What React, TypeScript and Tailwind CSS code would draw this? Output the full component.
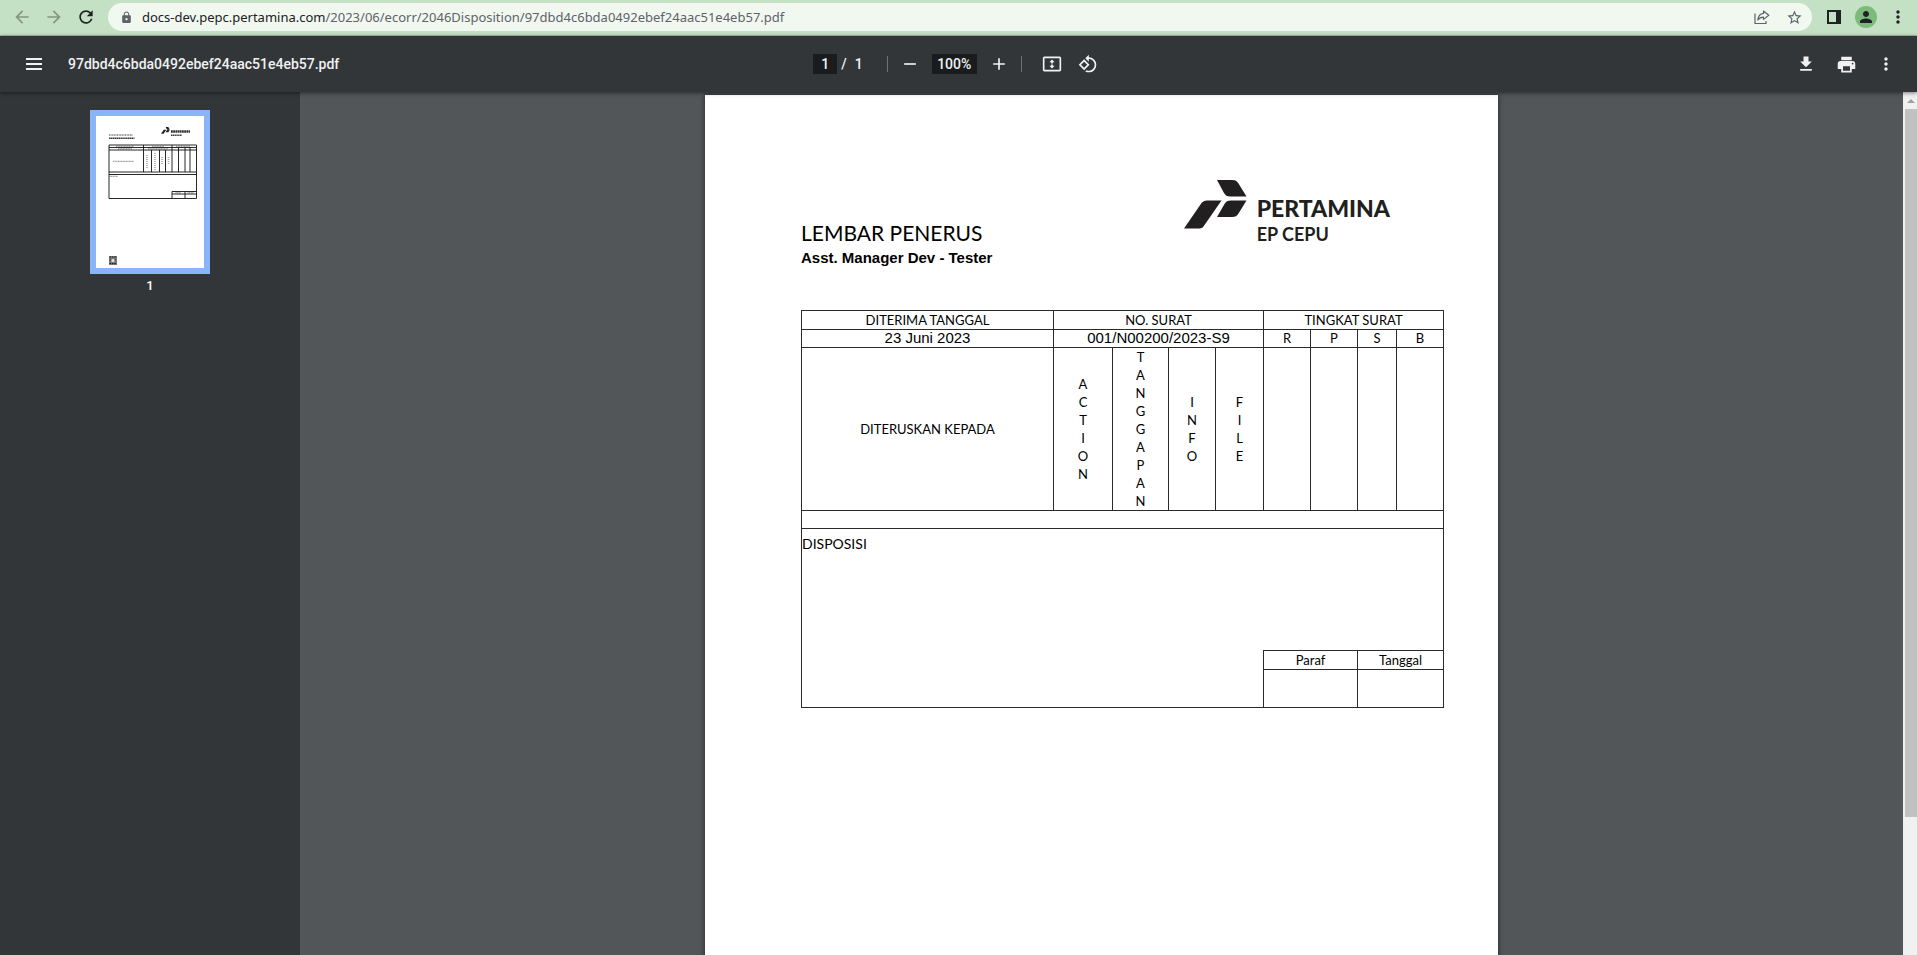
import type { ReactNode } from "react";
import {
  MdAdd,
  MdArrowBack,
  MdArrowForward,
  MdLock,
  MdMoreVert,
  MdPerson,
  MdPrint,
  MdRefresh,
  MdRemove,
  MdRotate90DegreesCcw,
  MdStarBorder,
} from "react-icons/md";

const FILE_NAME = "97dbd4c6bda0492ebef24aac51e4eb57.pdf";

function IconButton({ label, className = "", children }: { label: string; className?: string; children: ReactNode }) {
  return (
    <button type="button" aria-label={label} className={`flex size-8 shrink-0 items-center justify-center ${className}`}>
      {children}
    </button>
  );
}

function ShareIcon() {
  return (
    <svg width="16" height="16" viewBox="0 0 16 16" fill="none" stroke="currentColor" strokeWidth="1.2">
      <path d="M1 4.5V14.5H12V12" />
      <path d="M9.5 2L14.8 6.2L9.5 10.4V8.2C7 8.2 5.2 9 3.8 11C4.2 7.6 6.2 4.8 9.5 4.4Z" strokeLinejoin="round" />
    </svg>
  );
}

function SidePanelIcon() {
  return (
    <svg width="14" height="14" viewBox="0 0 14 14" fill="currentColor">
      <path fillRule="evenodd" d="M0 0H14V14H0ZM2 2V12H9V2Z" />
    </svg>
  );
}

function MenuIcon() {
  return (
    <svg width="16" height="12" viewBox="0 0 16 12" fill="currentColor">
      <path d="M0 0H16V2H0ZM0 5H16V7H0ZM0 10H16V12H0Z" />
    </svg>
  );
}

function FitPageIcon() {
  return (
    <svg width="20" height="20" viewBox="0 0 24 24" fill="currentColor">
      <path d="M21 3H3c-1.1 0-2 .9-2 2v14c0 1.1.9 2 2 2h18c1.1 0 2-.9 2-2V5c0-1.1-.9-2-2-2zm0 16H3V5h18v14z" />
      <path d="M12 6.5L8.8 10H11v1.5h2V10h2.200L12 6.500zM12 17.500L15.200 14H13v-1.500h-2V14H8.800L12 17.500z" />
    </svg>
  );
}

function DownloadIcon() {
  return (
    <svg width="20" height="20" viewBox="0 0 24 24" fill="currentColor">
      <path d="M19 9h-4V3H9v6H5l7 7 7-7zM5 18v2h14v-2H5z" />
    </svg>
  );
}

function LogoMark({ className }: { className: string }) {
  return (
    <svg className={className} viewBox="0 0 63 49" fill="#211f20" aria-hidden="true">
      <path d="M33 0H48C51.500 0 53 1 54.500 3.500L62.500 16.500H46C43 16.500 41.500 15.500 40 13Z" />
      <path d="M37.500 20.500H24C20 20.500 18.500 21.500 16.500 24.500L0 48.500H14.500C18 48.500 19 47.500 20.500 45Z" />
      <path d="M62.500 20.500L54.500 33.500C53 36 51.500 37 48 37H33L40.500 24C42 21.500 43.500 20.500 47 20.500Z" />
    </svg>
  );
}

function BrowserBar() {
  return (
    <header className="flex h-9 shrink-0 items-start border-b border-[#a3bda3] bg-[#c5e1c5] px-1.5 text-[#202124]">
      <nav className="flex h-7 items-center pt-1.5">
        <IconButton label="Back" className="text-[#829782]"><MdArrowBack size={20} /></IconButton>
        <IconButton label="Forward" className="text-[#829782]"><MdArrowForward size={20} /></IconButton>
        <IconButton label="Reload"><MdRefresh size={20} /></IconButton>
      </nav>
      <div className="mt-[3px] ml-1.5 flex h-7 min-w-0 flex-1 items-center rounded-full bg-[#f0f8f0] pl-3 text-[#5f6368]">
        <MdLock size={13} className="mr-2 shrink-0" />
        <p className="min-w-0 flex-1 truncate pl-px font-['Noto_Sans','Open_Sans',sans-serif] text-[13px] leading-5">
          <span className="text-[#202124]">docs-dev.pepc.pertamina.com</span>
          /2023/06/ecorr/2046Disposition/{FILE_NAME}
        </p>
        <IconButton label="Share"><ShareIcon /></IconButton>
        <IconButton label="Bookmark"><MdStarBorder size={17} /></IconButton>
        <span className="w-0.5" />
      </div>
      <div className="flex h-7 items-center pt-1.5 pl-1.5">
        <IconButton label="Side panel"><SidePanelIcon /></IconButton>
        <IconButton label="Profile">
          <span className="flex size-[22px] items-center justify-center rounded-full bg-[#7cbb7c]">
            <MdPerson size={18} />
          </span>
        </IconButton>
        <IconButton label="Browser menu" className="-mr-[3px]"><MdMoreVert size={20} /></IconButton>
      </div>
    </header>
  );
}

function ViewerToolbar() {
  return (
    <div className="z-10 grid h-14 shrink-0 grid-cols-3 items-center bg-[#323639] font-['Roboto',sans-serif] text-sm font-medium text-[#f1f1f1] shadow-[0_1px_4px_rgba(0,0,0,0.5)]">
      <div className="flex items-center gap-[18px] pl-[18px]">
        <IconButton label="Toggle sidebar"><MenuIcon /></IconButton>
        <h1 className="whitespace-nowrap">{FILE_NAME}</h1>
      </div>
      <div className="flex items-center justify-center">
        <input aria-label="Page number" defaultValue="1" className="h-5 w-6 bg-[#191b1c] text-center" />
        <span className="ml-1">/</span>
        <span className="ml-2">1</span>
        <span className="ml-6 h-4 w-px bg-[#6f7275]" />
        <IconButton label="Zoom out" className="ml-1.5"><MdRemove size={20} /></IconButton>
        <input aria-label="Zoom level" defaultValue="100%" className="mx-1.5 h-5 w-[45px] bg-[#191b1c] text-center" />
        <IconButton label="Zoom in"><MdAdd size={20} /></IconButton>
        <span className="ml-1.5 h-4 w-px bg-[#6f7275]" />
        <IconButton label="Fit to page" className="ml-3.5"><FitPageIcon /></IconButton>
        <IconButton label="Rotate" className="ml-1"><MdRotate90DegreesCcw size={20} /></IconButton>
      </div>
      <div className="flex items-center justify-end gap-2 pr-[15px]">
        <IconButton label="Download"><DownloadIcon /></IconButton>
        <IconButton label="Print"><MdPrint size={21} /></IconButton>
        <IconButton label="More actions"><MdMoreVert size={20} /></IconButton>
      </div>
    </div>
  );
}

function ThumbnailDrawing() {
  return (
    <svg viewBox="0 0 108 152" className="w-full bg-white" aria-hidden="true">
      <g fill="#211f20" transform="translate(65 11) scale(.14)">
        <path d="M33 0H52L63 17H42ZM20 20H38L18 49H0ZM44 20H63L52 38H33Z" />
      </g>
      <g stroke="#333" fill="none">
        <path d="M75 15.500H94" strokeWidth="2.600" strokeDasharray="1.800 .4" />
        <path d="M75 19.300H86" strokeWidth="1.500" strokeDasharray="1.300 .5" />
        <path d="M13 19H37" strokeWidth="1.500" strokeDasharray="1 .6" stroke="#777" />
        <path d="M13 22.300H38.500" strokeWidth="1.400" strokeDasharray="1.500 .4" />
        <path d="M20 30.300H38M56 30.300H68M80 30.300H94M22 32.800H36M52 32.800H72M17 45.300H38M13.500 60.300H22M79.500 76.800H85M91.500 76.800H98" strokeDasharray="1.200 .4" stroke="#888" />
        <path d="M51 39V53M59 37V55M66 41V49M72.500 41V49" strokeWidth="1.600" strokeDasharray=".8 1.200" stroke="#888" />
      </g>
      <path d="M13 29H100.500V82.500H13ZM13 31.500H100.500M13 34H100.500M13 56H100.500M13 58.500H100.500M47.500 29V56M55.500 34V56M63.500 34V56M69.500 34V56M76 29V56M82.500 31.500V56M89 31.500V56M94 31.500V56M76 82.500V75.500H100.500M76 78H100.500M89 75.500V82.500" fill="none" stroke="#111" strokeWidth=".9" />
      <path d="M13 140H21V149H13Z" fill="#777" />
      <path d="M13.500 141H20.500M13.500 144H20.500M13.500 147.500H20.500" stroke="#222" strokeDasharray="1.500 .9" />
      <circle cx="17" cy="144.500" r="1.700" fill="#ddd" />
    </svg>
  );
}

function Vertical({ word }: { word: string }) {
  return (
    <td className="border border-[#2b2b2b] leading-[18px]">
      {word.split("").map((letter, i) => (
        <span key={i} className="block">{letter}</span>
      ))}
    </td>
  );
}

const CELL = "border border-[#2b2b2b]";

function DispositionTable() {
  return (
    <table className="mt-10 w-full table-fixed border-collapse text-center text-[13px] leading-[17px]">
      <colgroup>
        <col className="w-[252px]" />
        <col className="w-[59px]" />
        <col className="w-[56px]" />
        <col className="w-[47px]" />
        <col className="w-[48px]" />
        <col className="w-[47px]" />
        <col className="w-[47px]" />
        <col className="w-[39px]" />
        <col className="w-[47px]" />
      </colgroup>
      <tbody>
        <tr className="h-[19px]">
          <th className={`${CELL} font-normal`}>DITERIMA TANGGAL</th>
          <th colSpan={4} className={`${CELL} font-normal`}>NO. SURAT</th>
          <th colSpan={4} className={`${CELL} font-normal`}>TINGKAT SURAT</th>
        </tr>
        <tr>
          <td className={`${CELL} font-['Liberation_Sans',sans-serif] text-[15px] leading-4 align-top`}>23 Juni 2023</td>
          <td colSpan={4} className={`${CELL} font-['Liberation_Sans',sans-serif] text-[15px] leading-4 align-top`}>001/N00200/2023-S9</td>
          <td className={CELL}>R</td>
          <td className={CELL}>P</td>
          <td className={CELL}>S</td>
          <td className={CELL}>B</td>
        </tr>
        <tr>
          <td className={CELL}>DITERUSKAN KEPADA</td>
          <Vertical word="ACTION" />
          <Vertical word="TANGGAPAN" />
          <Vertical word="INFO" />
          <Vertical word="FILE" />
          <td className={CELL} />
          <td className={CELL} />
          <td className={CELL} />
          <td className={CELL} />
        </tr>
        <tr className="h-[18px]">
          <td colSpan={9} className={CELL} />
        </tr>
        <tr className="h-[122px]">
          <td colSpan={9} className="border-x border-[#2b2b2b] pt-1.5 text-left align-top text-sm leading-[18px]">DISPOSISI</td>
        </tr>
        <tr className="h-[19px]">
          <td colSpan={5} rowSpan={2} className="border-b border-l border-[#2b2b2b]" />
          <td colSpan={2} className={CELL}>Paraf</td>
          <td colSpan={2} className={CELL}>Tanggal</td>
        </tr>
        <tr className="h-[38px]">
          <td colSpan={2} className={CELL} />
          <td colSpan={2} className={CELL} />
        </tr>
      </tbody>
    </table>
  );
}

function DocumentPage() {
  return (
    <article className="aspect-[210/297] w-[793px] shrink-0 bg-white pt-[85px] pr-[54px] pl-24 font-['Lato',sans-serif] text-black shadow-[0_0_5px_rgba(0,0,0,0.6)]">
      <div className="flex items-start justify-between pr-[54px]">
        <div className="pt-10">
          <h2 className="text-[21px] leading-[26px]">LEMBAR PENERUS</h2>
          <p className="font-['Liberation_Sans',sans-serif] text-[15px] leading-6 font-bold">Asst. Manager Dev - Tester</p>
        </div>
        <div className="flex gap-2.5 text-[#211f20]">
          <LogoMark className="h-[49px] w-[63px]" />
          <div className="pt-4 font-bold">
            <p className="text-[23px] leading-6 font-black">PERTAMINA</p>
            <p className="text-lg leading-7">EP CEPU</p>
          </div>
        </div>
      </div>
      <DispositionTable />
    </article>
  );
}

export default function App() {
  return (
    <div className="flex h-screen flex-col overflow-hidden bg-[#525659]">
      <BrowserBar />
      <ViewerToolbar />
      <div className="flex min-h-0 flex-1">
        <aside className="flex w-[300px] shrink-0 flex-col items-center bg-[#323639] pt-[18px]">
          <button type="button" aria-label="Go to first page" className="w-[120px] border-6 border-[#8ab4f8]">
            <ThumbnailDrawing />
          </button>
          <span className="font-['Roboto',sans-serif] text-[13px] leading-6 font-medium text-white">1</span>
        </aside>
        <main className="flex min-w-0 flex-1 items-start justify-center overflow-hidden pt-[3px]">
          <DocumentPage />
        </main>
        <div className="flex w-3.5 shrink-0 flex-col bg-[#f1f1f1] pl-0.5" aria-hidden="true">
          <svg viewBox="0 0 12 17" className="h-[17px] w-3" fill="#a0a0a0">
            <path d="M2 11L6 7L10 11Z" />
          </svg>
          <div className="h-[82%] bg-[#c1c1c1]" />
        </div>
      </div>
    </div>
  );
}
